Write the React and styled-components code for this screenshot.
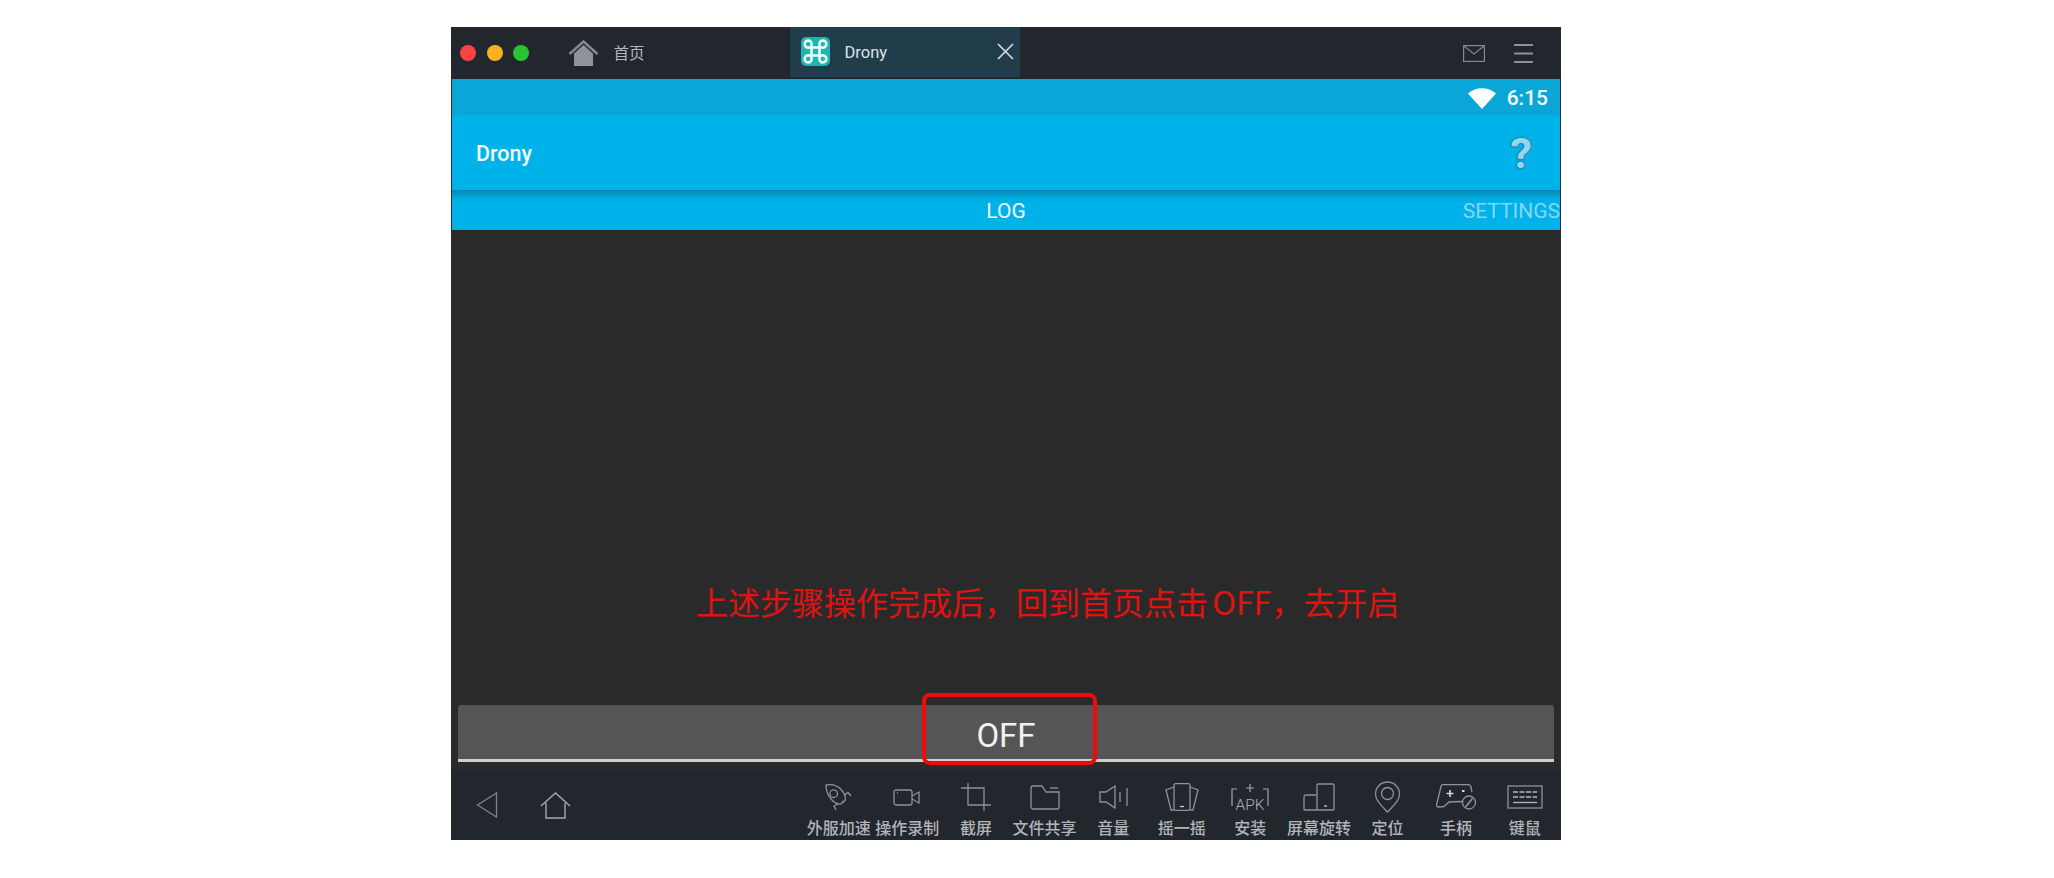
import React from "react";
import styled, { createGlobalStyle } from "styled-components";

const Global = createGlobalStyle`
  html, body { margin: 0; padding: 0; background: #fff; }
  body { font-family: Roboto, "Noto Sans CJK SC", sans-serif; }
`;

const Page = styled.div`
  width: 2054px;
  height: 878px;
  padding: 27px 0 0 451px;
  box-sizing: border-box;
  background: #fff;
  overflow: hidden;
`;

const Frame = styled.div`
  position: relative;
  width: 1110px;
  height: 813px;
  display: flex;
  flex-direction: column;
  background: #2a2a2a;
`;

const TitleBar = styled.header`
  height: 52px;
  flex: none;
  background: #22272e;
  display: flex;
  align-items: center;
  padding-left: 9px;
`;

const Light = styled.span`
  width: 16px;
  height: 16px;
  border-radius: 50%;
  background: ${(p) => p.$color};
  margin-right: 10.5px;
  flex: none;
`;

const HomeTab = styled.div`
  display: flex;
  align-items: center;
  gap: 15px;
  margin-left: 28px;
  width: 222px;
  color: #b4b6b9;
  font: 15.5px "Noto Sans CJK SC", sans-serif;
  line-height: 24px;
`;

const HomeLabel = styled.span`
  position: relative;
  top: -1px;
`;

const ActiveTab = styled.div`
  width: 230px;
  height: 50px;
  align-self: flex-start;
  box-sizing: border-box;
  background: #213d4c;
  display: flex;
  align-items: center;
  padding: 0 6px 2px 11px;
  color: #dfe3e6;
  font: 16.5px Roboto, sans-serif;
`;

const TabName = styled.span`
  margin-left: 15px;
  padding-top: 3px;
  flex: 1;
`;

const TitleActions = styled.div`
  margin-left: auto;
  display: flex;
  align-items: center;
  gap: 29px;
  padding-right: 28px;
`;

const StatusBar = styled.div`
  height: 36px;
  flex: none;
  margin: 0 1px;
  background: #0aa6d7;
  display: flex;
  align-items: center;
  justify-content: flex-end;
  gap: 11px;
  padding: 2px 12px 0 0;
  box-sizing: border-box;
  color: #f4fbfe;
  font: 500 21px Roboto, sans-serif;
`;

const AppBar = styled.div`
  height: 75px;
  flex: none;
  margin: 0 1px;
  box-sizing: border-box;
  background: #00b2ea;
  display: flex;
  align-items: center;
  justify-content: space-between;
  padding: 2px 28px 0 24px;
  color: #f6fcff;
  font: 500 21.5px Roboto, sans-serif;
`;

const HelpMark = styled.span`
  font: 700 43px Roboto, sans-serif;
  color: #8fd8f2;
  -webkit-text-stroke: 2.5px #2f86a8;
  paint-order: stroke fill;
  line-height: 1;
`;

const TabBar = styled.nav`
  height: 40px;
  flex: none;
  margin: 0 1px;
  padding-top: 2px;
  box-sizing: border-box;
  display: grid;
  grid-template-columns: 1fr auto 1fr;
  align-items: center;
  background: linear-gradient(#0a84ab 0, #00a8dd 7px, #00b2ea 13px);
  font: 21px Roboto, sans-serif;
`;

const TabLabel = styled.span`
  grid-column: ${(p) => (p.$active ? 2 : 3)};
  justify-self: ${(p) => (p.$active ? "center" : "end")};
  color: ${(p) => (p.$active ? "#f4fbfe" : "#86d6f3")};
`;

const Console = styled.main`
  flex: 1;
  display: flex;
  flex-direction: column;
  justify-content: flex-end;
  padding: 0 7px 8px;
  background: #2a2a2a;
`;

const Note = styled.p`
  margin: 0 0 80px;
  padding-left: 238px;
  color: #e01212;
  font: 32px "Noto Sans CJK SC", sans-serif;
  line-height: 48px;
  word-spacing: -3px;
  white-space: nowrap;
`;

const OffButton = styled.div`
  height: 57px;
  box-sizing: border-box;
  border-radius: 3px 3px 0 0;
  border-bottom: 3px solid #cfcfcf;
  padding-top: 7px;
  background: #555556;
  color: #f1f1f1;
  font: 33px Roboto, sans-serif;
  display: flex;
  align-items: center;
  justify-content: center;
`;

const Highlight = styled.div`
  position: absolute;
  left: 471px;
  top: 666px;
  width: 175px;
  height: 72px;
  box-sizing: border-box;
  border: 4px solid #f00a0a;
  border-radius: 8px;
`;

const BottomBar = styled.footer`
  height: 70px;
  flex: none;
  background: #22272e;
  display: flex;
  align-items: stretch;
  justify-content: space-between;
  padding-right: 2px;
`;

const NavGroup = styled.div`
  display: flex;
  align-items: center;
  gap: 42px;
  padding: 0 0 0 25px;
`;

const Tools = styled.div`
  display: flex;
`;

const Tool = styled.div`
  width: 68.6px;
  display: flex;
  flex-direction: column;
  align-items: center;
  color: #b2b4b7;
  font: 500 16px "Noto Sans CJK SC", sans-serif;
  white-space: nowrap;
`;

const ToolIcon = styled.div`
  height: 47px;
  display: flex;
  align-items: center;
  justify-content: center;
  padding-top: 7px;
  box-sizing: border-box;
`;

const ToolLabel = styled.span`
  line-height: 20px;
`;

const Ico = ({ w, h, children }) => (
  <svg width={w} height={h} viewBox={`0 0 ${w} ${h}`} fill="none" stroke="#8f9296" strokeWidth="1.3">
    {children}
  </svg>
);

const icons = {
  rocket: (
    <Ico w={27} h={27}>
      <path d="M1 1c6-1 12 1 15.500 5s4.500 8 3.500 10.500l-4 3.500c-3 .5-7-1.500-10-5S1 6 1 1z" />
      <circle cx="8.700" cy="9.700" r="3.800" />
      <path d="M19 11.500l4-3 3 3.500M13 20l-4 2 2 4M17 17l1.500 1.500" />
    </Ico>
  ),
  camera: (
    <Ico w={28} h={17}>
      <rect x="1" y="1" width="18" height="15" rx="2" />
      <path d="M19 7l7-4v11l-7-4" />
      <path d="M4 4h1" />
    </Ico>
  ),
  crop: (
    <Ico w={30} h={28}>
      <path d="M0 5h23v17M7 0v22h23M23 22v6" />
    </Ico>
  ),
  folder: (
    <Ico w={30} h={25}>
      <path d="M1 3a2 2 0 0 1 2-2h9l4 6h13v15a2 2 0 0 1-2 2H3a2 2 0 0 1-2-2z" />
      <path d="M20 3h8" />
    </Ico>
  ),
  volume: (
    <Ico w={29} h={24}>
      <path d="M1 7h6l9-6v22l-9-6H1z" />
      <path d="M21 7v10M28 3v18" />
    </Ico>
  ),
  shake: (
    <Ico w={34} h={28}>
      <rect x="9" y="0.700" width="16" height="26.600" rx="1.500" />
      <path d="M9 4L1 7l5 20h3M25 4l8 3-5 20h-3" />
      <path d="M15 23.500h4" stroke="#c8cacc" />
    </Ico>
  ),
  apk: (
    <svg width={38} height={27} viewBox="0 0 38 27" fill="none" stroke="#a3a6a9" strokeWidth="1.200">
      <path d="M6 5H1v17M32 5h5v17M19 0v8M15 4h8" />
      <text x="19" y="26" textAnchor="middle" fill="#aeb0b3" stroke="none" fontFamily="Roboto, sans-serif" fontWeight="300" fontSize="15.5">APK</text>
    </svg>
  ),
  rotate: (
    <Ico w={32} h={28}>
      <path d="M14 12H3a2 2 0 0 0-2 2v12a1 1 0 0 0 1 1h12" />
      <rect x="14" y="1" width="17" height="26" rx="1" />
      <path d="M21 23h3" stroke="#c8cacc" />
    </Ico>
  ),
  pin: (
    <Ico w={27} h={32}>
      <path d="M13.500 31C8 25 1.500 20 1.500 13a12 12 0 0 1 24 0c0 7-6.500 12-12 18z" />
      <circle cx="13.500" cy="12.500" r="6" />
    </Ico>
  ),
  pad: (
    <Ico w={41} h={26}>
      <path d="M26 17.500L13 18l-5 4.500L3 23q-3 0-2.300-3L5 2.500Q5.500 .7 7 .7h25a3 3 0 0 1 3 3l1 4.500" />
      <path d="M10.500 9.500h7M14 6v7" stroke="#d6d8da" strokeWidth="1.600" />
      <path d="M26 7h2.500" stroke="#d6d8da" strokeWidth="2" />
      <circle cx="33" cy="18.500" r="6.500" />
      <path d="M29.500 23l7-8.500" strokeWidth="1.800" />
    </Ico>
  ),
  keys: (
    <Ico w={36} h={24}>
      <rect x="1" y="1" width="34" height="22" />
      <path d="M6 7h24M6 12h24" strokeDasharray="5 1.500" stroke="#b5b7ba" />
      <path d="M6 17.500h24" stroke="#b5b7ba" />
    </Ico>
  ),
};

const tools = [
  ["外服加速", "rocket"],
  ["操作录制", "camera"],
  ["截屏", "crop"],
  ["文件共享", "folder"],
  ["音量", "volume"],
  ["摇一摇", "shake"],
  ["安装", "apk"],
  ["屏幕旋转", "rotate"],
  ["定位", "pin"],
  ["手柄", "pad"],
  ["键鼠", "keys"],
];

const DronyLogo = () => (
  <svg width="29" height="29" viewBox="0 0 29 29">
    <rect width="29" height="29" rx="5" fill="#1fb6b0" />
    <path
      d="M10.500 10.500H18.500V18.500H10.500ZM10.500 10.500H8a3.500 3.500 0 1 1 2.500-2.500ZM18.500 10.500V8a3.500 3.500 0 1 1 2.500 2.500ZM18.500 18.500H21a3.500 3.500 0 1 1-2.500 2.500ZM10.500 18.500V21a3.500 3.500 0 1 1-2.500-2.500Z"
      fill="none"
      stroke="#eefafa"
      strokeWidth="2.600"
    />
  </svg>
);

export default function App() {
  return (
    <Page>
      <Global />
      <Frame>
        <TitleBar>
          <Light $color="#fb4343" />
          <Light $color="#fcb01f" />
          <Light $color="#29c42f" />
          <HomeTab>
            <svg width="31" height="27" viewBox="0 0 31 27">
              <path d="M6 13.500L15.500 5 25 13.500V26H6z" fill="#909397" />
              <path d="M1.500 14L15.500 1.500 29.500 14" fill="none" stroke="#85888c" strokeWidth="2.500" />
            </svg>
            <HomeLabel>首页</HomeLabel>
          </HomeTab>
          <ActiveTab>
            <DronyLogo />
            <TabName>Drony</TabName>
            <svg width="17" height="17" viewBox="0 0 17 17" stroke="#d6dadd" strokeWidth="1.700">
              <path d="M1 1l15 15M16 1L1 16" />
            </svg>
          </ActiveTab>
          <TitleActions>
            <svg width="22" height="17" viewBox="0 0 22 17" fill="none" stroke="#85888c" strokeWidth="1.200">
              <rect x="0.600" y="0.600" width="20.800" height="15.800" />
              <path d="M1 1l10 8 10-8" />
            </svg>
            <svg width="19" height="21" viewBox="0 0 19 21" stroke="#8f9295" strokeWidth="2">
              <path d="M0 2h19M0 10.500h19M0 19h19" />
            </svg>
          </TitleActions>
        </TitleBar>

        <StatusBar>
          <svg width="28" height="21" viewBox="0 0 28 21">
            <path d="M14 21L0 5.500C8 -1.500 20 -1.500 28 5.500z" fill="#fff" />
          </svg>
          6:15
        </StatusBar>

        <AppBar>
          Drony
          <HelpMark>?</HelpMark>
        </AppBar>

        <TabBar>
          <TabLabel $active>LOG</TabLabel>
          <TabLabel>SETTINGS</TabLabel>
        </TabBar>

        <Console>
          <Note>上述步骤操作完成后，回到首页点击 OFF，去开启</Note>
          <OffButton>OFF</OffButton>
        </Console>

        <BottomBar>
          <NavGroup>
            <svg width="22" height="26" viewBox="0 0 22 26" fill="none" stroke="#7f8286" strokeWidth="1.300">
              <path d="M20.500 1v24L1.500 13z" />
            </svg>
            <svg width="31" height="27" viewBox="0 0 31 27" fill="none" stroke="#a7a9ac" strokeWidth="1.400">
              <path d="M1 14L15.500 1 30 14M6 11v15h19V11" />
            </svg>
          </NavGroup>
          <Tools>
            {tools.map(([label, icon]) => (
              <Tool key={label}>
                <ToolIcon>{icons[icon]}</ToolIcon>
                <ToolLabel>{label}</ToolLabel>
              </Tool>
            ))}
          </Tools>
        </BottomBar>

        <Highlight />
      </Frame>
    </Page>
  );
}
